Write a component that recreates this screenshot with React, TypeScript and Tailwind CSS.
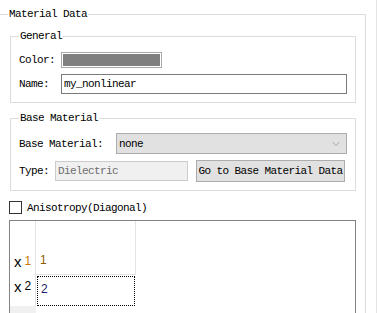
import { ChevronDown } from "lucide-react";

const mono = "font-['Liberation_Mono',monospace] text-[11px] tracking-[-0.6px] leading-[12px] text-black";

function App() {
  return (
    <div className={`flex h-[313px] w-[378px] overflow-hidden bg-white ${mono}`}>
      <div className="w-[376px]">
        <fieldset className="mt-[8px] w-[366px] border border-l-0 border-b-0 border-[#dcdcdc] pl-[10px] pr-[9px]">
          <legend className="ml-[-2px] px-[1px]">Material Data</legend>

          <fieldset className="mt-[10px] border border-[#dcdcdc] pl-[8px] pr-[8px] pt-[10px] pb-[8px]">
            <legend className="px-[1px]">General</legend>
            <div className="flex items-center">
              <span className="w-[42px]">Color:</span>
              <div className="h-[16px] w-[101px] border border-[#a9a9a9] bg-white p-[1px]">
                <div className="h-full w-full bg-[#808080]" />
              </div>
            </div>
            <div className="mt-[6px] flex items-center">
              <span className="w-[42px]">Name:</span>
              <div className="flex h-[20px] flex-1 items-center border border-[#7a7a7a] px-[2px]">
                my_nonlinear
              </div>
            </div>
          </fieldset>

          <fieldset className="mt-[9px] border border-[#dcdcdc] pl-[8px] pr-[8px] pt-[9px] pb-[8px]">
            <legend className="px-[1px]">Base Material</legend>
            <div className="flex items-center">
              <span className="w-[97px]">Base Material:</span>
              <div className="flex h-[21px] flex-1 items-center justify-between border border-[#adadad] bg-[#e1e1e1] pl-[2px] pr-[4px]">
                <span>none</span>
                <ChevronDown size={12} strokeWidth={1} color="#666" />
              </div>
            </div>
            <div className="mt-[6px] flex h-[22px] items-center">
              <span className="w-[36px]">Type:</span>
              <div className="flex h-[20px] w-[133px] items-center border border-[#cccccc] bg-[#f0f0f0] px-[2px] text-[#6d6d6d]">
                Dielectric
              </div>
              <div className="ml-[8px] flex h-[22px] w-[149px] items-center justify-center border border-[#adadad] bg-[#e1e1e1]">
                Go to Base Material Data
              </div>
            </div>
          </fieldset>

          <div className="ml-[-1px] mt-[10px] flex items-center">
            <div className="h-[13px] w-[13px] border border-[#333333] bg-white" />
            <span className="ml-[5px]">Anisotropy(Diagonal)</span>
          </div>

          <div className="ml-[-1px] mt-[6px] h-[120px] w-[347px] border border-b-0 border-[#828282] font-['Liberation_Sans',sans-serif] tracking-normal">
            <div className="flex h-[24px]">
              <div className="w-[26px] border-r border-[#e3e3e3]" />
              <div className="w-[100px] border-r border-[#e3e3e3]" />
            </div>
            <div className="flex h-[30px]">
              <div className="flex w-[26px] items-start border-r border-[#e3e3e3] pl-[4px] pt-[9px]">
                <span className="text-[15px] leading-[15px]">x</span>
                <span className="ml-[3px] mt-[1px] text-[12px] leading-[12px] text-[#c87800]">1</span>
              </div>
              <div className="w-[100px] border-b border-r border-[#e3e3e3] pl-[4px] pt-[9px] text-[12px] leading-[12px] text-[#8a5a00]">
                1
              </div>
            </div>
            <div className="flex h-[31px]">
              <div className="flex w-[26px] items-start border-r border-[#e3e3e3] pl-[4px] pt-[4px]">
                <span className="text-[15px] leading-[15px]">x</span>
                <span className="ml-[3px] mt-[1px] text-[12px] leading-[12px]">2</span>
              </div>
              <div className="ml-[1px] mt-[1px] w-[98px] border border-dotted border-black pl-[3px] pt-[6px] text-[12px] leading-[12px] text-[#1c1c6c]">
                2
              </div>
            </div>
            <div className="h-[40px] w-[26px] bg-[#f0f0f0]" />
          </div>
        </fieldset>
      </div>
      <div className="w-[2px] border-l border-[#e3e3e3]" />
    </div>
  );
}

export default App;
